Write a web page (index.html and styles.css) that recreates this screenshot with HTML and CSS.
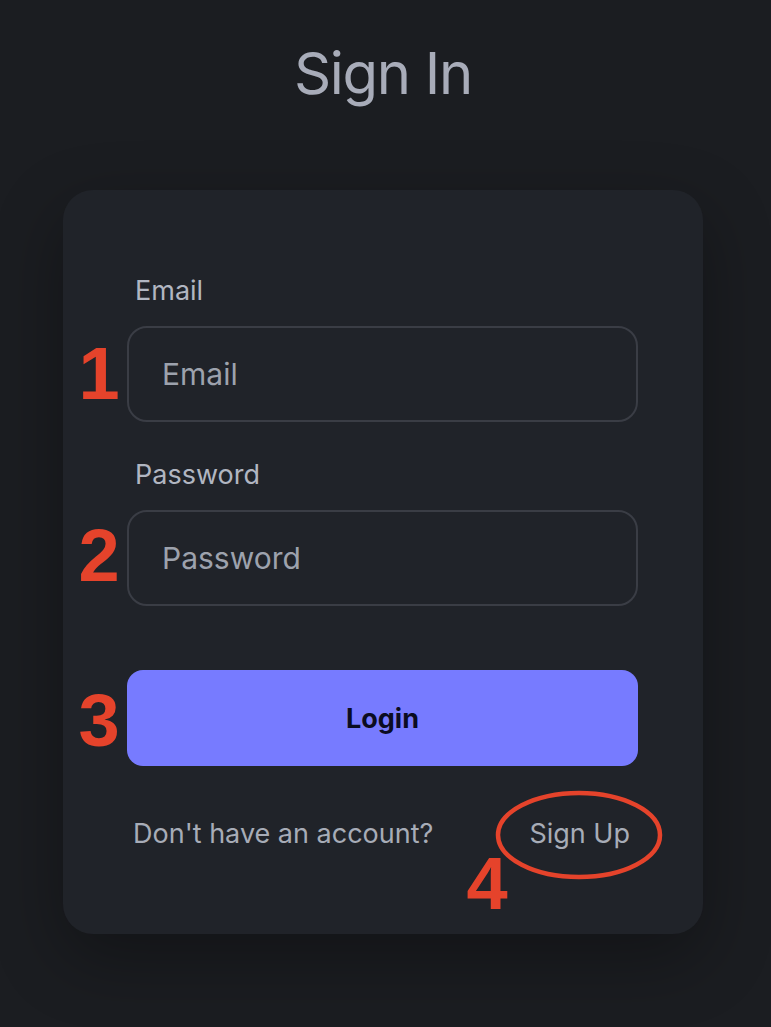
FILE: index.html
```html
<!DOCTYPE html>
<html lang="en">
<head>
<meta charset="utf-8">
<title>Sign In</title>
<link rel="stylesheet" href="styles.css">
</head>
<body>
<main class="page">
  <h1 class="title">Sign In</h1>
  <form class="card">
    <label class="label" for="email">Email</label>
    <input class="field" id="email" type="email" placeholder="Email">
    <label class="label label-pw" for="password">Password</label>
    <input class="field" id="password" type="password" placeholder="Password">
    <button class="login" type="button">Login</button>
    <div class="footer">
      <span class="hint">Don't have an account?</span>
      <a class="signup" href="#">Sign Up</a>
    </div>

    <span class="mark mark-1">1</span>
    <span class="mark mark-2">2</span>
    <span class="mark mark-3">3</span>
    <span class="mark mark-4">4</span>
    <svg class="ring" width="172" height="94" viewBox="0 0 172 94" aria-hidden="true">
      <ellipse cx="86" cy="47" rx="81" ry="42" fill="none" stroke="#e5432b" stroke-width="4.5"/>
    </svg>
  </form>
</main>
</body>
</html>
```

FILE: styles.css
```css
* {
  box-sizing: border-box;
}

html, body {
  margin: 0;
  padding: 0;
  background: #1b1d21;
}

body {
  font-family: Inter, "Noto Sans", "Liberation Sans", sans-serif;
  min-height: 1027px;
}

.page {
  display: flex;
  flex-direction: column;
  align-items: center;
  padding-right: 5px;
}

.title {
  margin: 38px 0 0;
  font-size: 58px;
  line-height: 71px;
  font-weight: 400;
  color: #a8acb9;
  letter-spacing: -1.3px;
}

.card {
  position: relative;
  margin-top: 81px;
  width: 640px;
  padding: 85px 65px 84px 64px;
  background: #202329;
  border-radius: 30px;
  box-shadow: 0 24px 70px rgba(0, 0, 0, 0.32);
  display: flex;
  flex-direction: column;
}

.label {
  display: block;
  margin-left: 8px;
  font-size: 27px;
  line-height: 32px;
  color: #b1b6c1;
}

.label-pw {
  margin-top: 37px;
}

.field {
  margin-top: 19px;
  width: 511px;
  height: 96px;
  padding: 0 0 0 33px;
  border: 2px solid #3a3d45;
  border-radius: 20px;
  background: transparent;
  font-family: inherit;
  font-size: 30px;
  color: #c8ccd5;
  outline: none;
}

.field::placeholder {
  color: #9da2ad;
  opacity: 1;
}

.login {
  margin-top: 64px;
  width: 511px;
  height: 96px;
  border: 0;
  border-radius: 16px;
  background: #777bff;
  font-family: inherit;
  font-size: 27px;
  font-weight: 700;
  color: #0b0c22;
  cursor: pointer;
}

.footer {
  margin-top: 52px;
  display: flex;
  justify-content: space-between;
  padding: 0 8px 0 6px;
  font-size: 27px;
  line-height: 32px;
}

.hint {
  color: #a7acb7;
}

.signup {
  color: #a7acb7;
  text-decoration: none;
}

.mark {
  position: absolute;
  width: 44px;
  text-align: center;
  font-family: "Liberation Sans", Arial, sans-serif;
  font-weight: 700;
  font-size: 74px;
  line-height: 74px;
  color: #e5432b;
}

.mark-1 { left: 14px; top: 147px; }
.mark-2 { left: 14px; top: 329px; }
.mark-3 { left: 14px; top: 494px; }
.mark-4 { left: 402px; top: 657px; }

.ring {
  position: absolute;
  left: 430px;
  top: 598px;
}
```
